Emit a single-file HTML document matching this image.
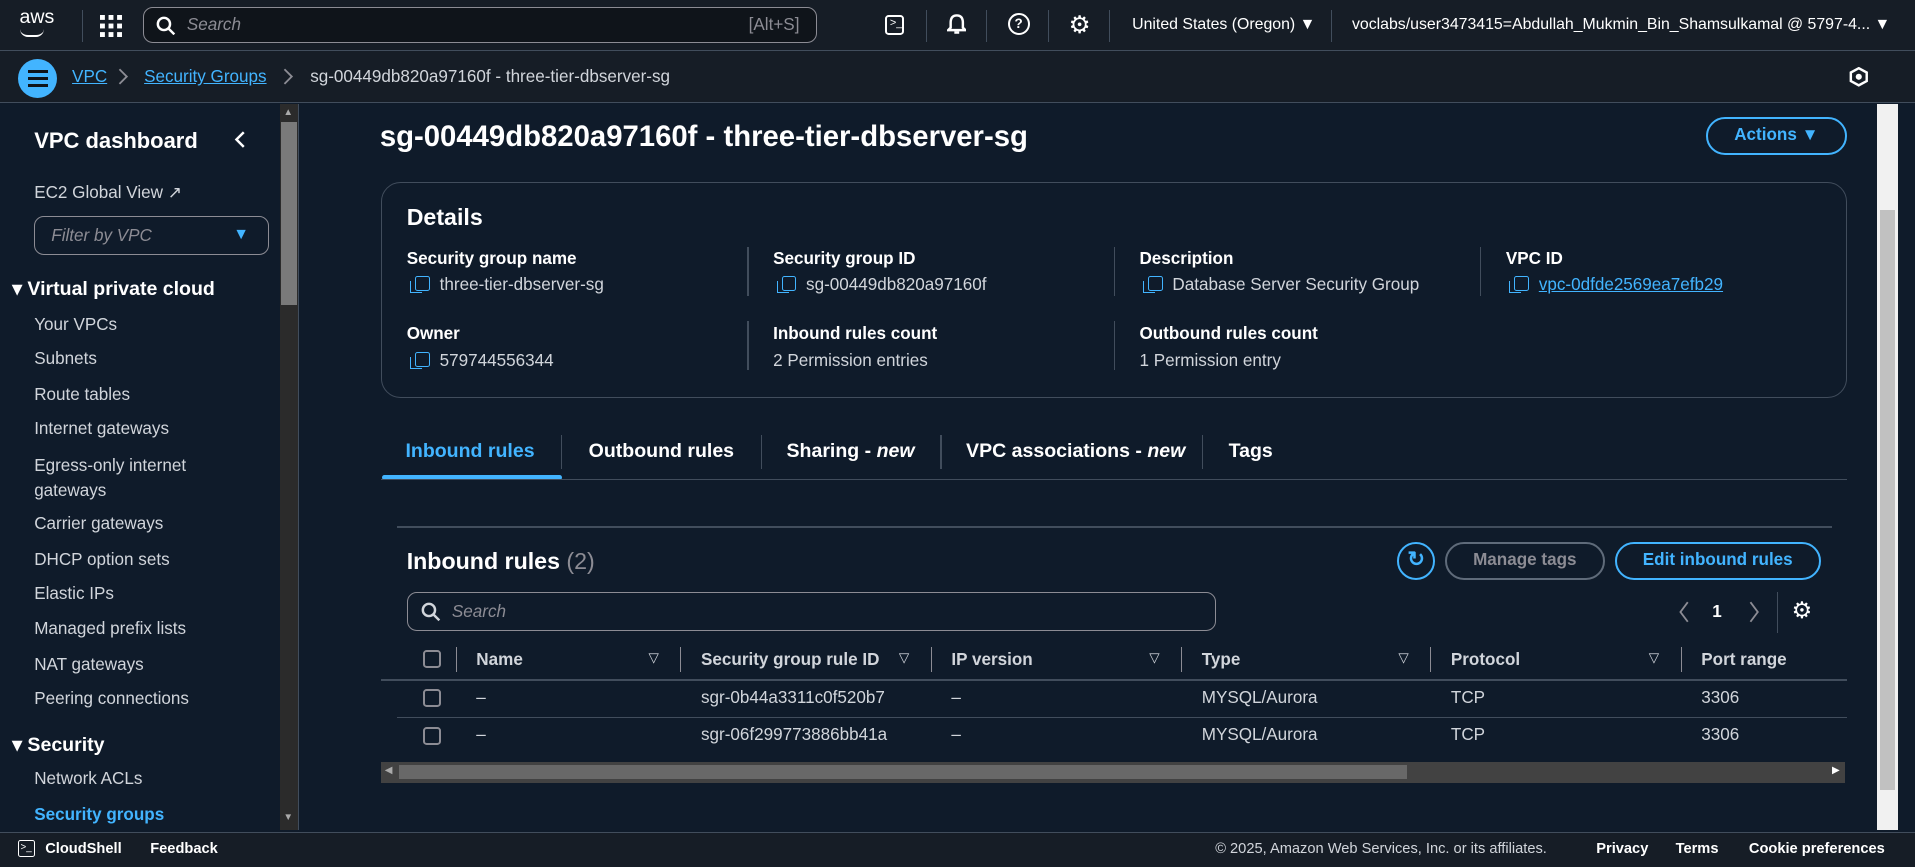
<!DOCTYPE html>
<html><head><meta charset="utf-8"><style>
*{box-sizing:border-box;margin:0;padding:0}
html,body{width:1915px;height:867px;overflow:hidden;background:#0f1b2a}
#w{zoom:1.2213;width:1568px;height:710px;position:relative;font-family:"Liberation Sans",sans-serif;color:#d1d5db;font-size:14px;background:#0f1b2a}
.a{position:absolute}
.lnk{color:#42b4ff;text-decoration:underline}
.bl{color:#fff;font-weight:bold}
.ic{display:inline-block;width:12px;height:12px;border:1.5px solid #42b4ff;border-radius:2px;position:relative;margin-right:8px;vertical-align:-1px}
.ic:after{content:"";position:absolute;left:-5px;top:3px;width:9px;height:9px;border-left:1.5px solid #42b4ff;border-bottom:1.5px solid #42b4ff}
.nav div{position:absolute;left:28px;color:#d1d5db;font-size:14px}
.th{position:absolute;top:532px;color:#d1d5db;font-weight:bold;font-size:14px}
.cell{position:absolute;font-size:14px;color:#d1d5db}
.cb{position:absolute;left:346px;width:15px;height:15px;border:2px solid #8c8c94;border-radius:3px}
.sep{position:absolute;width:1px;height:20px;background:#8c8c94;top:530px}
.tri{position:absolute;top:532px;font-size:11px;color:#d1d5db}
</style></head><body><div id="w">
<div class="a" style="left:0;top:0;width:1568px;height:42px;background:#161d26;border-bottom:1px solid #414d5c"></div>
<div class="a" style="left:16px;top:5px;color:#fff;font-size:16px;">aws</div>
<div class="a" style="left:16px;top:24px;width:20px;height:6px;border-bottom:2px solid #fff;border-radius:0 0 12px 12px"></div>
<div class="a" style="left:67px;top:8px;width:1px;height:26px;background:#414d5c"></div>
<svg class="a" style="left:82px;top:12px" width="18" height="18"><g fill="#fff"><rect x="0" y="0" width="4" height="4"/><rect x="7" y="0" width="4" height="4"/><rect x="14" y="0" width="4" height="4"/><rect x="0" y="7" width="4" height="4"/><rect x="7" y="7" width="4" height="4"/><rect x="14" y="7" width="4" height="4"/><rect x="0" y="14" width="4" height="4"/><rect x="7" y="14" width="4" height="4"/><rect x="14" y="14" width="4" height="4"/></g></svg>
<div class="a" style="left:117px;top:6px;width:552px;height:29px;border:1.5px solid #8c8c94;border-radius:8px;background:#0f141a"></div>
<svg class="a" style="left:128px;top:13px" width="16" height="16"><circle cx="6.5" cy="6.5" r="5" stroke="#fff" stroke-width="2" fill="none"/><line x1="10" y1="10" x2="15" y2="15" stroke="#fff" stroke-width="2"/></svg>
<div class="a" style="left:153px;top:12px;color:#8c8c94;font-style:italic">Search</div>
<div class="a" style="left:613px;top:12px;color:#8c8c94">[Alt+S]</div>
<div class="a" style="left:725px;top:12px;width:15px;height:17px;border:2px solid #fff;border-radius:3px;font-size:9px;color:#fff;padding-left:2px;line-height:11px">&gt;_</div>
<div class="a" style="left:758px;top:8px;width:1px;height:26px;background:#414d5c"></div>
<svg class="a" style="left:775px;top:11px" width="16" height="18"><path d="M8 2 C4 2 3 5 3 8 L3 12 L1 14 L15 14 L13 12 L13 8 C13 5 12 2 8 2 Z" fill="none" stroke="#fff" stroke-width="2"/><path d="M6 16 L10 16" stroke="#fff" stroke-width="2"/></svg>
<div class="a" style="left:807px;top:8px;width:1px;height:26px;background:#414d5c"></div>
<div class="a" style="left:825px;top:11px;width:18px;height:18px;border:2px solid #fff;border-radius:50%;color:#fff;font-size:11px;font-weight:bold;text-align:center;line-height:14px">?</div>
<div class="a" style="left:858px;top:8px;width:1px;height:26px;background:#414d5c"></div>
<div class="a" style="left:875px;top:8px;color:#fff;font-size:20px">⚙</div>
<div class="a" style="left:908px;top:8px;width:1px;height:26px;background:#414d5c"></div>
<div class="a" style="left:927px;top:13px;color:#fff;font-size:13px">United States (Oregon) ▼</div>
<div class="a" style="left:1090px;top:8px;width:1px;height:26px;background:#414d5c"></div>
<div class="a" style="left:1107px;top:13px;color:#fff;font-size:13px;white-space:nowrap">voclabs/user3473415=Abdullah_Mukmin_Bin_Shamsulkamal @ 5797-4... ▼</div>
<div class="a" style="left:0;top:42px;width:1568px;height:42px;background:#161d26;border-bottom:1px solid #414d5c"></div>
<div class="a" style="left:15px;top:48px;width:32px;height:32px;border-radius:50%;background:#42b4ff"></div>
<div class="a" style="left:23px;top:57px;width:16px;height:14px;border-top:2.5px solid #0f141a;border-bottom:2.5px solid #0f141a"></div>
<div class="a" style="left:23px;top:63px;width:16px;height:2.5px;background:#0f141a"></div>
<div class="a lnk" style="left:59px;top:55px">VPC</div>
<svg class="a" style="left:96px;top:56px" width="10" height="14"><path d="M2 1 L8 7 L2 13" fill="none" stroke="#8c8c94" stroke-width="1.5"/></svg>
<div class="a lnk" style="left:118px;top:55px">Security Groups</div>
<svg class="a" style="left:231px;top:56px" width="10" height="14"><path d="M2 1 L8 7 L2 13" fill="none" stroke="#8c8c94" stroke-width="1.5"/></svg>
<div class="a" style="left:254px;top:55px;color:#d1d5db">sg-00449db820a97160f - three-tier-dbserver-sg</div>
<svg class="a" style="left:1514px;top:55px" width="16" height="16"><polygon points="8,1 14.5,4.5 14.5,11.5 8,15 1.5,11.5 1.5,4.5" fill="none" stroke="#fff" stroke-width="2"/><circle cx="8" cy="8" r="2.5" fill="#fff"/></svg>
<div class="a" style="left:0;top:85px;width:245px;height:595px;background:#0f1b2a;border-right:1px solid #414d5c"></div>
<div class="a" style="left:229px;top:85px;width:15px;height:595px;background:#2b2b2b"></div>
<div class="a" style="left:230px;top:100px;width:13px;height:150px;background:#7a7a7a"></div>
<div class="a" style="left:232px;top:88px;color:#aaa;font-size:8px">▲</div>
<div class="a" style="left:232px;top:665px;color:#aaa;font-size:8px">▼</div>
<div class="a bl" style="left:28px;top:105px;font-size:18px">VPC dashboard</div>
<svg class="a" style="left:192px;top:107px" width="10" height="14"><path d="M8 1 L2 7 L8 13" fill="none" stroke="#fff" stroke-width="2"/></svg>
<div class="nav">
<div style="top:150px">EC2 Global View ↗</div>
<div style="top:258px">Your VPCs</div>
<div style="top:286px">Subnets</div>
<div style="top:315px">Route tables</div>
<div style="top:343px">Internet gateways</div>
<div style="top:372px;line-height:20px">Egress-only internet<br>gateways</div>
<div style="top:421px">Carrier gateways</div>
<div style="top:450px">DHCP option sets</div>
<div style="top:478px">Elastic IPs</div>
<div style="top:507px">Managed prefix lists</div>
<div style="top:536px">NAT gateways</div>
<div style="top:564px">Peering connections</div>
<div style="top:630px">Network ACLs</div>
<div style="top:659px;color:#42b4ff;font-weight:bold">Security groups</div>
</div>
<div class="a" style="left:28px;top:177px;width:192px;height:32px;border:1.5px solid #8c8c94;border-radius:8px"></div>
<div class="a" style="left:42px;top:185px;color:#8c8c94;font-style:italic">Filter by VPC</div>
<div class="a" style="left:191px;top:185px;color:#42b4ff;font-size:13px">▼</div>
<div class="a bl" style="left:10px;top:227px;font-size:16px">▾ Virtual private cloud</div>
<div class="a bl" style="left:10px;top:600px;font-size:16px">▾ Security</div>
<div class="a" style="left:1537px;top:85px;width:17px;height:595px;background:#f1f1f1"></div>
<div class="a" style="left:1539px;top:172px;width:13px;height:475px;background:#c1c1c1"></div>
<div class="a bl" style="left:311px;top:98px;font-size:24px">sg-00449db820a97160f - three-tier-dbserver-sg</div>
<div class="a" style="left:1397px;top:96px;width:115px;height:31px;border:2px solid #42b4ff;border-radius:16px;color:#42b4ff;font-weight:bold;font-size:14px;text-align:center;line-height:27px">Actions ▼</div>
<div class="a" style="left:312px;top:149px;width:1200px;height:177px;border:1px solid #414d5c;border-radius:16px"></div>
<div class="a bl" style="left:333px;top:167px;font-size:19px">Details</div>
<div class="a bl" style="left:333px;top:204px">Security group name</div>
<div class="a" style="left:340px;top:225px"><span class="ic"></span>three-tier-dbserver-sg</div>
<div class="a bl" style="left:633px;top:204px">Security group ID</div>
<div class="a" style="left:640px;top:225px"><span class="ic"></span>sg-00449db820a97160f</div>
<div class="a bl" style="left:933px;top:204px">Description</div>
<div class="a" style="left:940px;top:225px"><span class="ic"></span>Database Server Security Group</div>
<div class="a bl" style="left:1233px;top:204px">VPC ID</div>
<div class="a" style="left:1240px;top:225px"><span class="ic"></span><span class="lnk">vpc-0dfde2569ea7efb29</span></div>
<div class="a bl" style="left:333px;top:265px">Owner</div>
<div class="a" style="left:340px;top:287px"><span class="ic"></span>579744556344</div>
<div class="a bl" style="left:633px;top:265px">Inbound rules count</div>
<div class="a" style="left:633px;top:287px">2 Permission entries</div>
<div class="a bl" style="left:933px;top:265px">Outbound rules count</div>
<div class="a" style="left:933px;top:287px">1 Permission entry</div>
<div class="a" style="left:612px;top:202px;width:1px;height:40px;background:#414d5c"></div>
<div class="a" style="left:912px;top:202px;width:1px;height:40px;background:#414d5c"></div>
<div class="a" style="left:1212px;top:202px;width:1px;height:40px;background:#414d5c"></div>
<div class="a" style="left:612px;top:263px;width:1px;height:40px;background:#414d5c"></div>
<div class="a" style="left:912px;top:263px;width:1px;height:40px;background:#414d5c"></div>
<div class="a" style="left:332px;top:360px;color:#42b4ff;font-weight:bold;font-size:16px">Inbound rules</div>
<div class="a" style="left:313px;top:389px;width:147px;height:4px;background:#42b4ff;border-radius:2px"></div>
<div class="a" style="left:459px;top:356px;width:1px;height:28px;background:#414d5c"></div>
<div class="a bl" style="left:482px;top:360px;font-size:16px">Outbound rules</div>
<div class="a" style="left:623px;top:356px;width:1px;height:28px;background:#414d5c"></div>
<div class="a bl" style="left:644px;top:360px;font-size:16px">Sharing - <i>new</i></div>
<div class="a" style="left:770px;top:356px;width:1px;height:28px;background:#414d5c"></div>
<div class="a bl" style="left:791px;top:360px;font-size:16px">VPC associations - <i>new</i></div>
<div class="a" style="left:984px;top:356px;width:1px;height:28px;background:#414d5c"></div>
<div class="a bl" style="left:1006px;top:360px;font-size:16px">Tags</div>
<div class="a" style="left:312px;top:392px;width:1200px;height:1px;background:#414d5c"></div>
<div class="a" style="left:325px;top:431px;width:1175px;height:1px;background:#414d5c"></div>
<div class="a bl" style="left:333px;top:449px;font-size:19px">Inbound rules <span style="font-weight:normal;color:#8c8c94">(2)</span></div>
<div class="a" style="left:1144px;top:444px;width:31px;height:31px;border:2px solid #42b4ff;border-radius:50%;color:#42b4ff;text-align:center;line-height:27px;font-size:17px;font-weight:bold">↻</div>
<div class="a" style="left:1183px;top:444px;width:131px;height:31px;border:2px solid #5f6b7a;border-radius:16px;color:#8c8c94;font-weight:bold;text-align:center;line-height:27px">Manage tags</div>
<div class="a" style="left:1322px;top:444px;width:169px;height:31px;border:2px solid #42b4ff;border-radius:16px;color:#42b4ff;font-weight:bold;text-align:center;line-height:27px">Edit inbound rules</div>
<div class="a" style="left:333px;top:485px;width:663px;height:32px;border:1.5px solid #8c8c94;border-radius:8px"></div>
<svg class="a" style="left:345px;top:493px" width="16" height="16"><circle cx="6.5" cy="6.5" r="5" stroke="#d1d5db" stroke-width="2" fill="none"/><line x1="10" y1="10" x2="15" y2="15" stroke="#d1d5db" stroke-width="2"/></svg>
<div class="a" style="left:370px;top:493px;color:#8c8c94;font-style:italic">Search</div>
<svg class="a" style="left:1374px;top:492px" width="10" height="18"><path d="M8 1 L2 9 L8 17" fill="none" stroke="#8c8c94" stroke-width="1.5"/></svg>
<div class="a bl" style="left:1402px;top:493px">1</div>
<svg class="a" style="left:1431px;top:492px" width="10" height="18"><path d="M2 1 L8 9 L2 17" fill="none" stroke="#8c8c94" stroke-width="1.5"/></svg>
<div class="a" style="left:1455px;top:485px;width:1px;height:33px;background:#414d5c"></div>
<div class="a" style="left:1467px;top:489px;color:#fff;font-size:19px">⚙</div>
<div class="cb" style="top:532px"></div>
<div class="sep" style="left:373px"></div>
<div class="th" style="left:390px">Name</div><div class="tri" style="left:531px">▽</div>
<div class="sep" style="left:557px"></div>
<div class="th" style="left:574px">Security group rule ID</div><div class="tri" style="left:736px">▽</div>
<div class="sep" style="left:762px"></div>
<div class="th" style="left:779px">IP version</div><div class="tri" style="left:941px">▽</div>
<div class="sep" style="left:967px"></div>
<div class="th" style="left:984px">Type</div><div class="tri" style="left:1145px">▽</div>
<div class="sep" style="left:1171px"></div>
<div class="th" style="left:1188px">Protocol</div><div class="tri" style="left:1350px">▽</div>
<div class="sep" style="left:1376px"></div>
<div class="th" style="left:1393px">Port range</div>
<div class="a" style="left:312px;top:556px;width:1200px;height:2px;background:#414d5c"></div>
<div class="cb" style="top:564px"></div>
<div class="cell" style="left:390px;top:563px">–</div>
<div class="cell" style="left:574px;top:563px">sgr-0b44a3311c0f520b7</div>
<div class="cell" style="left:779px;top:563px">–</div>
<div class="cell" style="left:984px;top:563px">MYSQL/Aurora</div>
<div class="cell" style="left:1188px;top:563px">TCP</div>
<div class="cell" style="left:1393px;top:563px">3306</div>
<div class="a" style="left:325px;top:587px;width:1187px;height:1px;background:#414d5c"></div>
<div class="cb" style="top:595px"></div>
<div class="cell" style="left:390px;top:594px">–</div>
<div class="cell" style="left:574px;top:594px">sgr-06f299773886bb41a</div>
<div class="cell" style="left:779px;top:594px">–</div>
<div class="cell" style="left:984px;top:594px">MYSQL/Aurora</div>
<div class="cell" style="left:1188px;top:594px">TCP</div>
<div class="cell" style="left:1393px;top:594px">3306</div>
<div class="a" style="left:312px;top:624px;width:1199px;height:17px;background:#424242"></div>
<div class="a" style="left:327px;top:626px;width:825px;height:12px;background:#686868"></div>
<div class="a" style="left:315px;top:626px;color:#aaa;font-size:8px">◀</div>
<div class="a" style="left:1500px;top:626px;color:#fff;font-size:8px">▶</div>
<div class="a" style="left:0;top:681px;width:1568px;height:29px;background:#161d26;border-top:1px solid #414d5c"></div>
<div class="a" style="left:15px;top:688px;width:14px;height:14px;border:1.5px solid #fff;border-radius:2px;font-size:8px;color:#fff;line-height:11px;padding-left:1px">&gt;_</div>
<div class="a" style="left:37px;top:689px;color:#fff;font-size:12px;font-weight:bold">CloudShell</div>
<div class="a" style="left:123px;top:689px;color:#fff;font-size:12px;font-weight:bold">Feedback</div>
<div class="a" style="left:995px;top:689px;color:#d1d5db;font-size:12px">© 2025, Amazon Web Services, Inc. or its affiliates.</div>
<div class="a" style="left:1307px;top:689px;color:#fff;font-size:12px;font-weight:bold">Privacy</div>
<div class="a" style="left:1372px;top:689px;color:#fff;font-size:12px;font-weight:bold">Terms</div>
<div class="a" style="left:1432px;top:689px;color:#fff;font-size:12px;font-weight:bold">Cookie preferences</div>
</div></body></html>
